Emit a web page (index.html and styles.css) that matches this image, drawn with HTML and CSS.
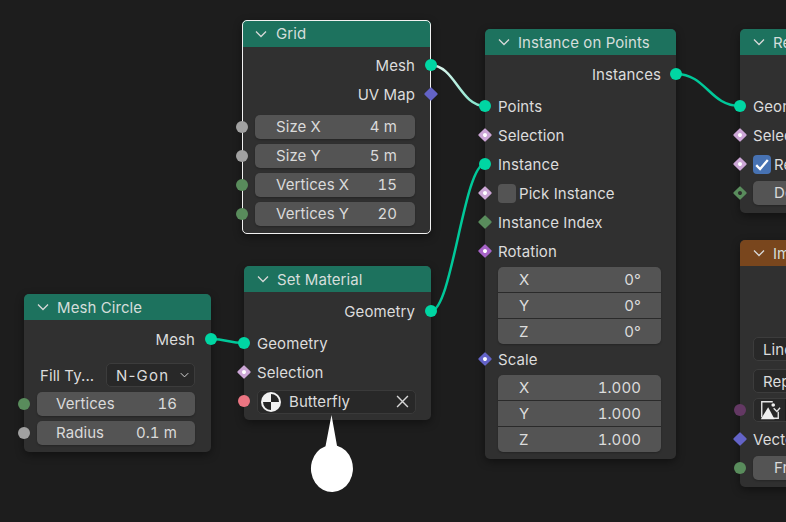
FILE: index.html
```html
<!DOCTYPE html>
<html lang="en">
<head>
<meta charset="utf-8">
<title>Geometry Nodes</title>
<link rel="stylesheet" href="styles.css">
</head>
<body>
<main class="canvas">
  <svg class="links" width="786" height="522" viewBox="0 0 786 522" aria-hidden="true">
    <defs>
      <linearGradient id="selected-link" gradientUnits="userSpaceOnUse" x1="430" y1="65" x2="485" y2="106">
        <stop offset="0" stop-color="#e6f7f1"/>
        <stop offset="1" stop-color="#7ee3ca"/>
      </linearGradient>
    </defs>
    <path class="link link-selected" d="M430 65C455 65 460 106 485 106"/>
    <path class="link" d="M676 74C706 74 710 106 740 106"/>
    <path class="link" d="M211 339C227 339 228 343 244 343"/>
    <path class="link" d="M431 311C452 311 464 164 485 164"/>
  </svg>

  <section class="node node-grid selected">
    <header class="head"><svg class="chev" viewBox="0 0 12 8"><path d="M1 1.500l5 5 5-5"/></svg><span>Grid</span></header>
    <div class="body">
      <div class="row out"><span>Mesh</span><i class="sock geo"></i></div>
      <div class="row out"><span>UV Map</span><i class="sock dia vec"></i></div>
      <div class="gap4"></div>
      <div class="row"><i class="sock flt"></i><div class="field"><span>Size X</span><span>4 m</span></div></div>
      <div class="row"><i class="sock flt"></i><div class="field"><span>Size Y</span><span>5 m</span></div></div>
      <div class="row"><i class="sock int"></i><div class="field"><span>Vertices X</span><span>15</span></div></div>
      <div class="row"><i class="sock int"></i><div class="field"><span>Vertices Y</span><span>20</span></div></div>
    </div>
  </section>

  <section class="node node-circle">
    <header class="head"><svg class="chev" viewBox="0 0 12 8"><path d="M1 1.500l5 5 5-5"/></svg><span>Mesh Circle</span></header>
    <div class="body">
      <div class="row out"><span>Mesh</span><i class="sock geo"></i></div>
      <div class="gap7"></div>
      <div class="row"><span class="prop">Fill Ty...</span><div class="select"><span class="spaced">N-Gon</span><svg class="chev small" viewBox="0 0 12 8"><path d="M1 1.500l5 5 5-5"/></svg></div></div>
      <div class="row"><i class="sock int"></i><div class="field"><span>Vertices</span><span>16</span></div></div>
      <div class="row"><i class="sock flt"></i><div class="field"><span>Radius</span><span>0.1 m</span></div></div>
    </div>
  </section>

  <section class="node node-material">
    <header class="head"><svg class="chev" viewBox="0 0 12 8"><path d="M1 1.500l5 5 5-5"/></svg><span>Set Material</span></header>
    <div class="body">
      <div class="row out"><span>Geometry</span><i class="sock geo"></i></div>
      <div class="gap3"></div>
      <div class="row"><i class="sock geo"></i><span>Geometry</span></div>
      <div class="row"><i class="sock dia bool dot"></i><span>Selection</span></div>
      <div class="row"><i class="sock mat"></i>
        <div class="picker">
          <svg class="mat-icon" viewBox="0 0 20 20"><circle cx="10" cy="10" r="10" fill="#f2f2f2"/><path d="M10 2A8 8 0 0 1 18 10H10ZM10 10V18A8 8 0 0 1 2 10Z" fill="#262626"/></svg>
          <span class="grow">Butterfly</span>
          <svg class="close" viewBox="0 0 12 12"><path d="M1 1l10 10M11 1L1 11"/></svg>
        </div>
      </div>
    </div>
  </section>

  <section class="node node-instance">
    <header class="head"><svg class="chev" viewBox="0 0 12 8"><path d="M1 1.500l5 5 5-5"/></svg><span>Instance on Points</span></header>
    <div class="body">
      <div class="row out"><span>Instances</span><i class="sock geo"></i></div>
      <div class="gap3"></div>
      <div class="row"><i class="sock geo"></i><span>Points</span></div>
      <div class="row"><i class="sock dia bool dot"></i><span>Selection</span></div>
      <div class="row"><i class="sock geo"></i><span>Instance</span></div>
      <div class="row"><i class="sock dia bool dot"></i><span class="box"></span><span>Pick Instance</span></div>
      <div class="row"><i class="sock dia int"></i><span>Instance Index</span></div>
      <div class="row"><i class="sock dia rot dot"></i><span>Rotation</span></div>
      <div class="multi">
        <div class="cell"><span>X</span><span>0°</span></div>
        <div class="cell"><span>Y</span><span>0°</span></div>
        <div class="cell"><span>Z</span><span>0°</span></div>
      </div>
      <div class="row"><i class="sock dia vec dot"></i><span>Scale</span></div>
      <div class="multi">
        <div class="cell"><span>X</span><span>1.000</span></div>
        <div class="cell"><span>Y</span><span>1.000</span></div>
        <div class="cell"><span>Z</span><span>1.000</span></div>
      </div>
    </div>
  </section>

  <section class="node node-realize">
    <header class="head"><svg class="chev" viewBox="0 0 12 8"><path d="M1 1.500l5 5 5-5"/></svg><span>Realize Instances</span></header>
    <div class="body">
      <div class="spacer-out"></div>
      <div class="row"><i class="sock geo"></i><span>Geometry</span></div>
      <div class="row"><i class="sock dia bool dot"></i><span>Selection</span></div>
      <div class="row"><i class="sock dia bool dot"></i><span class="box on"><svg viewBox="0 0 14 14"><path d="M2.500 7.500l3 3 6-7"/></svg></span><span>Realize All</span></div>
      <div class="row"><i class="sock dia int dot"></i><div class="field"><span>Depth</span></div></div>
    </div>
  </section>

  <section class="node node-image">
    <header class="head brown"><svg class="chev" viewBox="0 0 12 8"><path d="M1 1.500l5 5 5-5"/></svg><span>Image Texture</span></header>
    <div class="body">
      <div class="spacer-img"></div>
      <div class="row"><div class="select wide"><span>Linear</span></div></div>
      <div class="gap3"></div>
      <div class="row"><div class="select wide"><span>Repeat</span></div></div>
      <div class="row"><i class="sock img"></i>
        <div class="select wide flush">
          <span class="img-btn"><svg viewBox="0 0 24 24"><path class="frame" d="M15 3H3V20M13 21H21V14"/><path class="solid" d="M2 22L10 9 17 22Z"/><circle class="solid" cx="15.500" cy="6.500" r="2"/><path class="frame" d="M16 10l3.500 3.500 3.500-4"/></svg></span>
        </div>
      </div>
      <div class="row"><i class="sock dia vec"></i><span>Vector</span></div>
      <div class="row"><i class="sock int"></i><div class="field"><span>Frame</span></div></div>
    </div>
  </section>

  <svg class="pin" width="44" height="80" viewBox="0 0 44 80" aria-hidden="true">
    <path d="M21.500 2L27 32.700A21 23.500 0 1 1 15.500 33.150Z"/>
  </svg>
</main>
</body>
</html>
```

FILE: styles.css
```css
* { box-sizing: border-box; }
html, body { margin: 0; padding: 0; }
body {
  width: 786px;
  height: 522px;
  overflow: hidden;
  background: #1d1d1d;
  font-family: Inter, "Liberation Sans", sans-serif;
  font-size: 15px;
  letter-spacing: .08px;
  color: #dcdcdc;
}
.canvas { position: relative; width: 786px; height: 522px; overflow: hidden; }

.links { position: absolute; left: 0; top: 0; }
.link { fill: none; stroke: #00c99a; stroke-width: 2.500; }
.link-selected { stroke: url(#selected-link); }

.pin { position: absolute; left: 310px; top: 413px; }
.pin path { fill: #fff; }

.node {
  position: absolute;
  background: #303030;
  border-radius: 5px;
  box-shadow: 0 3px 9px rgba(0, 0, 0, .4);
}
.node.selected { outline: 1.500px solid #f1f1f1; outline-offset: -1px; }
.node-grid { left: 242px; top: 20px; width: 189px; height: 214px; }
.node-circle { left: 24px; top: 294px; width: 187px; height: 158px; }
.node-material { left: 244px; top: 266px; width: 187px; height: 154px; }
.node-instance { left: 485px; top: 29px; width: 191px; height: 430px; }
.node-realize { left: 740px; top: 29px; width: 190px; height: 184px; }
.node-image { left: 740px; top: 240px; width: 190px; height: 247px; }

.head {
  display: flex;
  align-items: center;
  gap: 8px;
  height: 26px;
  padding-left: 13px;
  border-radius: 5px 5px 0 0;
  background: #1d725e;
  color: #d5dedb;
}
.head.brown { background: #79461d; }
.node-grid .head { height: 27px; gap: 9px; }

.chev { width: 12px; height: 8px; flex: none; }
.chev path { fill: none; stroke: #d8d8d8; stroke-width: 1.300; }
.chev.small { width: 9px; height: 6px; }

.body { padding: 5px 16px 0 13px; }
.node-grid .body { padding-top: 4px; }
.node-instance .body { padding-right: 15px; }

.row {
  position: relative;
  display: flex;
  align-items: center;
  height: 29px;
}
.row.out { justify-content: flex-end; }

.gap3 { height: 3px; }
.gap4 { height: 4px; }
.gap7 { height: 7px; }
.spacer-out { height: 32px; }
.spacer-img { height: 64px; }

.sock {
  position: absolute;
  left: -19px;
  top: 8px;
  width: 12px;
  height: 12px;
  border-radius: 50%;
  background: #a1a1a1;
}
.row.out .sock { left: auto; right: -22px; }
.node-instance .row.out .sock { right: -21px; }
.sock.geo { background: #00d6a3; }
.sock.flt { background: #a1a1a1; }
.sock.int { background: #598c5c; }
.sock.mat { background: #eb7582; }
.sock.img { background: #633863; }
.sock.dia {
  left: -18px;
  top: 9px;
  width: 10px;
  height: 10px;
  border-radius: 1px;
  transform: rotate(45deg);
}
.row.out .sock.dia { right: -21px; }
.sock.bool { background: #cca6d6; }
.sock.vec { background: #6363c7; }
.sock.rot { background: #a663c7; }
.sock.dot::after {
  content: "";
  position: absolute;
  left: 3px;
  top: 3px;
  width: 4px;
  height: 4px;
  border-radius: 50%;
  background: #fff;
}
.sock.int.dot::after { background: #2d2d2d; }

.field, .picker, .select {
  display: flex;
  align-items: center;
  height: 24px;
  margin-top: -1px;
  border-radius: 5px;
}
.field {
  flex: 1;
  justify-content: space-between;
  padding: 0 18px 1px 21px;
  background: #545454;
  color: #dadada;
  font-feature-settings: "tnum";
  box-shadow: 0 1px 2px rgba(0, 0, 0, .25);
}
.node-circle .field { padding-left: 19px; }

.prop { width: 69px; padding-left: 3px; flex: none; }
.select {
  flex: 1;
  justify-content: space-between;
  padding: 0 5px 0 9px;
  background: #282828;
  border: 1px solid #3c3c3c;
}
.select.wide { margin-right: -400px; }
.select.flush { padding: 0; }
.spaced { letter-spacing: 1.200px; }
.img-btn {
  display: flex;
  align-items: center;
  justify-content: center;
  width: 32px;
  height: 100%;
  border-right: 1px solid #1d1d1d;
}
.img-btn svg { width: 22px; height: 22px; }
.frame { fill: none; stroke: #e6e6e6; stroke-width: 1.500; }
.solid { fill: #f0f0f0; }

.picker {
  flex: 1;
  gap: 8px;
  margin-top: 0;
  margin-right: -1px;
  padding: 0 6px 0 3px;
  background: #282828;
  border: 1px solid #3a3a3a;
}
.mat-icon { width: 20px; height: 20px; flex: none; }
.grow { flex: 1; }
.close { width: 13px; height: 13px; flex: none; }
.close path { fill: none; stroke: #d6d6d6; stroke-width: 1.300; }

.box {
  display: flex;
  width: 18px;
  height: 19px;
  margin-right: 3px;
  flex: none;
  border-radius: 4px;
  background: #545454;
}
.box.on { background: #4772b3; }
.box svg { width: 18px; height: 19px; }
.box svg path { fill: none; stroke: #fff; stroke-width: 1.800; }

.multi {
  display: flex;
  flex-direction: column;
  gap: 1px;
  margin: 1px 0;
  border-radius: 5px;
  overflow: hidden;
  background: #2a2a2a;
  font-feature-settings: "tnum";
  box-shadow: 0 1px 2px rgba(0, 0, 0, .25);
}
.cell {
  display: flex;
  justify-content: space-between;
  align-items: center;
  height: 25px;
  padding: 0 20px 0 21px;
  background: #545454;
}
```
